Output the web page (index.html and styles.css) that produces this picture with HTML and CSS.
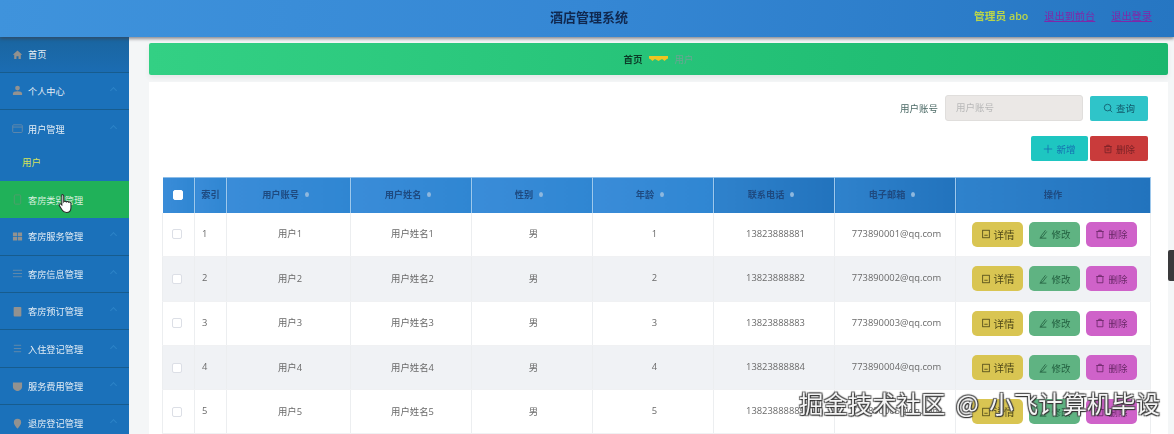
FILE: index.html
```html
<!DOCTYPE html>
<html lang="zh">
<head>
<meta charset="utf-8">
<title>酒店管理系统</title>
<link rel="stylesheet" href="styles.css">
</head>
<body>
<div class="app">
  <header class="top">
    <div class="title">酒店管理系统</div>
    <div class="top-right">
      <span class="admin">管理员 abo</span>
      <a class="out">退出到前台</a>
      <a class="out">退出登录</a>
    </div>
  </header>
  <div class="body">
    <nav class="side">
      <div class="item first"><svg class="ic" viewBox="0 0 12 12"><path d="M6 1.500 .8 6.300h1.600V11h2.500V7.800h2.200V11h2.500V6.300h1.600z"/></svg>首页</div>
      <div class="item"><svg class="ic" viewBox="0 0 12 12"><circle cx="6" cy="3.400" r="2.600"/><path d="M1 11V9.200C1 7.600 3 6.800 6 6.800s5 .8 5 2.400V11z"/></svg>个人中心<i class="arrow"></i></div>
      <div class="item open"><svg class="ic line" viewBox="0 0 12 12"><rect x=".8" y="2" width="10.400" height="8.400" rx="1"/><path d="M.8 4.400h10.400"/></svg>用户管理<i class="arrow"></i></div>
      <div class="sub">用户</div>
      <div class="item active"><svg class="ic line" viewBox="0 0 12 12"><rect x="2.500" y="1" width="7" height="10" rx="1"/></svg>客房类别管理</div>
      <div class="item"><svg class="ic" viewBox="0 0 12 12"><path d="M1 1.500h4.600v4H1zM6.400 1.500H11v4H6.400zM1 6.400h4.600v4H1zM6.400 6.400H11v4H6.400z"/></svg>客房服务管理<i class="arrow"></i></div>
      <div class="item"><svg class="ic line" viewBox="0 0 12 12"><path d="M1 2.500h10M1 6h10M1 9.500h10"/></svg>客房信息管理<i class="arrow"></i></div>
      <div class="item"><svg class="ic" viewBox="0 0 12 12"><rect x="1.800" y="1" width="8.400" height="10.400" rx="1"/></svg>客房预订管理<i class="arrow"></i></div>
      <div class="item"><svg class="ic line" viewBox="0 0 12 12"><path d="M2 2.500h8M2 6h8M2 9.500h8"/></svg>入住登记管理<i class="arrow"></i></div>
      <div class="item"><svg class="ic" viewBox="0 0 12 12"><path d="M1 1.500h10v4.700C11 9 8 10.500 6 11 4 10.500 1 9 1 6.200z"/></svg>服务费用管理<i class="arrow"></i></div>
      <div class="item"><svg class="ic" viewBox="0 0 12 12"><path d="M6 .8a4 4 0 0 0-4 4c0 2.800 4 6.800 4 6.800s4-4 4-6.800a4 4 0 0 0-4-4z"/></svg>退房登记管理<i class="arrow"></i></div>
    </nav>
    <main class="main">
      <div class="crumb"><span class="crumb-home">首页</span><svg class="crumb-sep" viewBox="0 0 19 6"><path d="M0 0h19v2.500l-1.500.8L15.500 5l-2-1.700h-1L9.500 5 6.500 3.300h-1L3.500 5 1.500 3.300 0 2.500z"/></svg><span class="crumb-cur">用户</span></div>
      <section class="panel">
        <div class="search">
          <label class="search-label">用户账号</label>
          <div class="input">用户账号</div>
          <button class="btn btn-query"><svg class="bi" viewBox="0 0 12 12"><circle cx="5.500" cy="5.500" r="4"/><path d="m8.500 8.500 2.500 2.500"/></svg>查询</button>
        </div>
        <div class="tools">
          <button class="btn btn-add"><svg class="bi" viewBox="0 0 12 12"><path d="M6 1v10M1 6h10"/></svg>新增</button>
          <button class="btn btn-del"><svg class="bi" viewBox="0 0 12 12"><path d="M1.500 3h9M4.500 3V1.500h3V3M2.500 3v7.500h7V3M5 5v3.500M7 5v3.500"/></svg>删除</button>
        </div>
        <table class="grid">
          <colgroup>
            <col class="c-s"><col class="c-s"><col class="c-a"><col class="c-d"><col class="c-d"><col class="c-d"><col class="c-d"><col class="c-d"><col class="c-e">
          </colgroup>
          <thead>
            <tr>
              <th><span class="check head"></span></th>
              <th>索引</th>
              <th>用户账号<i class="sort"></i></th>
              <th>用户姓名<i class="sort"></i></th>
              <th>性别<i class="sort"></i></th>
              <th>年龄<i class="sort"></i></th>
              <th>联系电话<i class="sort"></i></th>
              <th>电子邮箱<i class="sort"></i></th>
              <th class="th-ops">操作</th>
            </tr>
          </thead>
          <tbody>
            <tr><td class="cell-check"><span class="check"></span></td><td class="idx">1</td><td>用户1</td><td>用户姓名1</td><td>男</td><td>1</td><td>13823888881</td><td>773890001@qq.com</td><td class="ops"><div class="acts"><button class="act a-y"><svg class="bi" viewBox="0 0 12 12"><rect x="2" y="1.500" width="8" height="9"/><path d="M4 7.500h4"/></svg>详情</button><button class="act a-g"><svg class="bi" viewBox="0 0 12 12"><path d="M9 1.500 4 8l-1 2.500 2.500-1L10.500 3M2 11h8"/></svg>修改</button><button class="act a-p"><svg class="bi" viewBox="0 0 12 12"><path d="M1.500 3h9M4.500 3V1.500h3V3M2.500 3v7.500h7V3"/></svg>删除</button></div></td></tr>
            <tr><td class="cell-check"><span class="check"></span></td><td class="idx">2</td><td>用户2</td><td>用户姓名2</td><td>男</td><td>2</td><td>13823888882</td><td>773890002@qq.com</td><td class="ops"><div class="acts"><button class="act a-y"><svg class="bi" viewBox="0 0 12 12"><rect x="2" y="1.500" width="8" height="9"/><path d="M4 7.500h4"/></svg>详情</button><button class="act a-g"><svg class="bi" viewBox="0 0 12 12"><path d="M9 1.500 4 8l-1 2.500 2.500-1L10.500 3M2 11h8"/></svg>修改</button><button class="act a-p"><svg class="bi" viewBox="0 0 12 12"><path d="M1.500 3h9M4.500 3V1.500h3V3M2.500 3v7.500h7V3"/></svg>删除</button></div></td></tr>
            <tr><td class="cell-check"><span class="check"></span></td><td class="idx">3</td><td>用户3</td><td>用户姓名3</td><td>男</td><td>3</td><td>13823888883</td><td>773890003@qq.com</td><td class="ops"><div class="acts"><button class="act a-y"><svg class="bi" viewBox="0 0 12 12"><rect x="2" y="1.500" width="8" height="9"/><path d="M4 7.500h4"/></svg>详情</button><button class="act a-g"><svg class="bi" viewBox="0 0 12 12"><path d="M9 1.500 4 8l-1 2.500 2.500-1L10.500 3M2 11h8"/></svg>修改</button><button class="act a-p"><svg class="bi" viewBox="0 0 12 12"><path d="M1.500 3h9M4.500 3V1.500h3V3M2.500 3v7.500h7V3"/></svg>删除</button></div></td></tr>
            <tr><td class="cell-check"><span class="check"></span></td><td class="idx">4</td><td>用户4</td><td>用户姓名4</td><td>男</td><td>4</td><td>13823888884</td><td>773890004@qq.com</td><td class="ops"><div class="acts"><button class="act a-y"><svg class="bi" viewBox="0 0 12 12"><rect x="2" y="1.500" width="8" height="9"/><path d="M4 7.500h4"/></svg>详情</button><button class="act a-g"><svg class="bi" viewBox="0 0 12 12"><path d="M9 1.500 4 8l-1 2.500 2.500-1L10.500 3M2 11h8"/></svg>修改</button><button class="act a-p"><svg class="bi" viewBox="0 0 12 12"><path d="M1.500 3h9M4.500 3V1.500h3V3M2.500 3v7.500h7V3"/></svg>删除</button></div></td></tr>
            <tr><td class="cell-check"><span class="check"></span></td><td class="idx">5</td><td>用户5</td><td>用户姓名5</td><td>男</td><td>5</td><td>13823888885</td><td>773890005@qq.com</td><td class="ops"><div class="acts"><button class="act a-y"><svg class="bi" viewBox="0 0 12 12"><rect x="2" y="1.500" width="8" height="9"/><path d="M4 7.500h4"/></svg>详情</button><button class="act a-g"><svg class="bi" viewBox="0 0 12 12"><path d="M9 1.500 4 8l-1 2.500 2.500-1L10.500 3M2 11h8"/></svg>修改</button><button class="act a-p"><svg class="bi" viewBox="0 0 12 12"><path d="M1.500 3h9M4.500 3V1.500h3V3M2.500 3v7.500h7V3"/></svg>删除</button></div></td></tr>
          </tbody>
        </table>
      </section>
    </main>
  </div>
  <svg class="cursor" viewBox="0 0 16 22"><path d="M4.500 1.500c1 0 1.600.7 1.600 1.600v6c.5-.8 2.300-.8 2.700.2.600-.7 2.200-.6 2.600.4.700-.5 2.400-.2 2.400 1.300v4.500c0 3.200-2 5-4.800 5-2.500 0-3.800-1-5-3L1.300 13c-.6-1 .7-2.300 1.800-1.300l1 1V3.100c0-.9-.5-1.600.4-1.600z"/></svg>
</div>
<div class="thumb"></div>
<div class="mark">掘金技术社区 @ 小飞计算机毕设</div>
</body>
</html>
```
FILE: styles.css
```css
* { box-sizing: border-box; }
html, body { margin: 0; height: 434px; overflow: hidden; }
body { font-family: "Open Sans", "Noto Sans CJK SC", sans-serif; background: #f4f6f7; position: relative; }
.app { position: relative; height: 434px; filter: blur(.5px); }

.top { height: 37px; display: flex; align-items: center; justify-content: center; position: relative; background: linear-gradient(100deg, #3f93dc 0%, #3587d4 50%, #2676c2 100%); box-shadow: 0 2px 3px rgba(60,60,70,.55); z-index: 2; padding: 0 0 5px 4px; }
.title { font-size: 13px; font-weight: 700; color: #10284f; }
.top-right { position: absolute; right: 22px; top: 8px; display: flex; gap: 16px; font-size: 10.200px; line-height: 16px; }
.admin { color: #b9d54a; font-size: 10.700px; font-weight: 600; }
.out { color: #8028a8; text-decoration: underline; }

.body { display: flex; height: 397px; }
.side { width: 129px; flex: none; background: #1b71ba; overflow: hidden; }
.item { height: 37.400px; display: flex; align-items: center; padding-left: 12px; font-size: 9.200px; color: #e4edf5; border-bottom: 1px solid #175c8e; position: relative; }
.item.first { height: 35.500px; background: linear-gradient(#1a659f, #1b6cb2); }
.item.open { border-bottom: 0; }
.item.active { background: #20b159; height: 37px; border-bottom: 0; color: #d8f0de; }
.sub { height: 34px; padding: 0 0 4px 22px; display: flex; align-items: center; font-size: 9.500px; color: #d5e25c; }
.ic { width: 11px; height: 11px; margin-right: 5px; fill: #a0968c; flex: none; opacity: .9; }
.ic.line { fill: none; stroke: #6f8da8; stroke-width: 1; }
.active .ic.line { stroke: #5a9d70; }
.arrow { position: absolute; right: 13px; top: 50%; width: 5px; height: 5px; margin-top: -3px; border-top: 1px solid #2c82c6; border-right: 1px solid #2c82c6; transform: rotate(-45deg); }

.main { flex: 1; padding: 6px 6px 0 20px; min-width: 0; }
.crumb { height: 32px; border-radius: 2px; background: linear-gradient(90deg, #33d084, #1ab76e); display: flex; align-items: center; justify-content: center; gap: 6px; font-size: 9.500px; box-shadow: 0 3px 5px rgba(60,60,70,.08); padding-bottom: 1px; }
.crumb-home { color: #0c3b28; font-weight: 700; }
.crumb-sep { width: 19px; height: 6px; fill: #efc521; }
.crumb-cur { color: #6aa592; margin-left: 1px; }

.panel { margin-top: 7px; background: #fff; height: 352px; padding: 13px 20px 0 14px; }
.search { display: flex; align-items: center; justify-content: flex-end; height: 26px; }
.search-label { font-size: 9.500px; color: #4c6a66; margin-right: 7px; }
.input { width: 138px; height: 26px; background: #ebe8e6; border: 1px solid #e0dedc; border-radius: 3px; font-size: 9.500px; color: #b8b8b8; line-height: 24px; padding-left: 10px; margin-right: 7px; }
.btn { height: 25px; width: 58px; border: 0; border-radius: 2px; font: inherit; font-size: 9.500px; display: flex; align-items: center; justify-content: center; gap: 3px; padding: 0; }
.bi { width: 10px; height: 10px; fill: none; stroke: currentColor; stroke-width: 1; flex: none; }
.btn-query { background: #2fc4c9; color: #12586a; }
.tools { display: flex; justify-content: flex-end; gap: 2px; margin-top: 15px; }
.btn-add { width: 57px; background: #1ec6c1; color: #1670b0; }
.btn-del { background: #c93b3b; color: #7a2226; }

.grid { width: 988px; margin: 16px 0 0 -1px; table-layout: fixed; border-collapse: collapse; font-size: 9.400px; color: #6a6a6a; }
.c-s { width: 32px; } .c-a { width: 124px; } .c-d { width: 121px; } .c-e { width: 195px; }
.grid th { height: 35px; padding: 0 6px 3px 0; background: linear-gradient(90deg, #3a8cd8, #2f86d2); border-right: 1px solid #9ec8ec; border-top: 1px solid #8cbde8; font-size: 9.200px; font-weight: 700; color: #1e4a80; text-align: center; }
.grid th:first-child, .grid th:nth-child(2), .grid th.th-ops { padding-right: 0; }
.grid th:nth-child(n+7) { background: linear-gradient(90deg, #2f82cc, #2273bd); }
.grid td { height: 44.300px; padding: 0 0 2px 3px; text-align: center; border-right: 1px solid #eceef0; border-bottom: 1px solid #f0f1f3; }
.grid tbody tr:nth-child(even) td { background: #f0f2f5; }
.grid td.cell-check { border-left: 1px solid #eceef0; padding: 0 3px 2px 0; }
.grid td.idx { text-align: left; padding-left: 7px; }
.grid td.ops { padding: 0; }
.sort { display: inline-block; width: 4px; height: 5px; margin-left: 6px; border-radius: 50%; background: #8fb8de; vertical-align: 1px; }
.check { display: inline-block; width: 10px; height: 10px; background: #fff; border: 1px solid #dcdfe6; border-radius: 2px; vertical-align: middle; }
.check.head { border-color: #fff; }
.acts { display: flex; gap: 6px; padding-left: 16px; }
.act { width: 51px; height: 25px; border: 0; border-radius: 5px; font: inherit; font-size: 9.500px; display: flex; align-items: center; justify-content: center; gap: 3px; padding: 0; }
.a-y { background: #d9c552; color: #4f4818; font-size: 10.500px; }
.a-g { background: #5fb382; color: #236040; }
.a-p { background: #cf62c9; color: #6a2868; }

.cursor { position: absolute; left: 58px; top: 193px; width: 15px; height: 21px; fill: #fff; stroke: #2a2a2a; stroke-width: 1.100; z-index: 3; }
.thumb { position: absolute; right: 0; top: 250px; width: 6px; height: 31px; background: #3a3a3c; border-radius: 2px 0 0 2px; }
.mark { position: absolute; left: 799px; top: 387px; font-size: 24.400px; line-height: 32px; word-spacing: 5px; white-space: nowrap; color: #f4f4f4; font-family: "Noto Sans CJK SC", sans-serif; text-shadow: 1px 1px 1px #333, -1px -1px 1px #555, 1px -1px 1px #555, -1px 1px 1px #555; }
```
